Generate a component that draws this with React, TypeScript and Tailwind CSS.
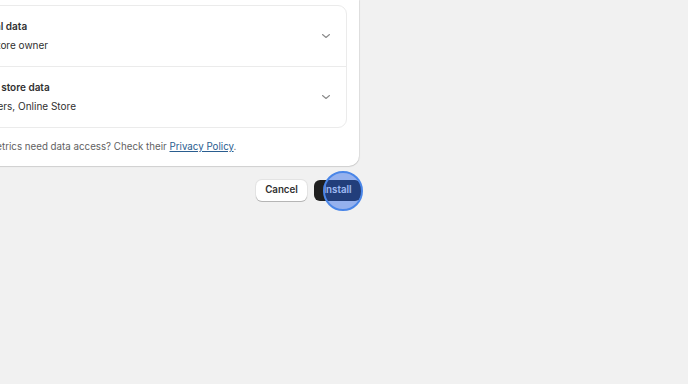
import React from 'react';

const ROWS = [
  { title: 'Personal data', detail: 'Email, store owner' },
  { title: 'General store data', detail: 'Customers, Online Store' },
];

function Chevron() {
  return (
    <svg width="10" height="10" viewBox="0 0 10 10" fill="none" className="text-[#8a8a8a]">
      <path d="M1.5 3.5L5 6.5l3.5-3" stroke="currentColor" strokeWidth="1.1" strokeLinecap="round" strokeLinejoin="round" />
    </svg>
  );
}

export default function App() {
  return (
    <div
      className="min-h-[384px] w-[688px] overflow-hidden bg-[#f1f1f1] text-[#303030]"
      style={{ fontFamily: 'Inter, "Liberation Sans", sans-serif' }}
    >
      <div className="-ml-[53px] flex w-[412px] flex-col">
        {/* Dialog body */}
        <div className="rounded-br-[10px] bg-white pl-[13px] pr-[12px] pt-[5px] pb-[11px] shadow-[0_1px_1px_rgba(0,0,0,0.14),1px_0_1px_rgba(0,0,0,0.07)]">
          <div className="rounded-[9px] border border-[#ebebeb]">
            {ROWS.map((row, i) => (
              <div
                key={row.title}
                className={`flex items-center justify-between py-[11px] pr-[15px] ${
                  i > 0 ? 'border-t border-[#ebebeb]' : ''
                }`}
              >
                <div className="text-[10px] leading-[19px]">
                  <div className="font-semibold">{row.title}</div>
                  <div>{row.detail}</div>
                </div>
                <Chevron />
              </div>
            ))}
          </div>
          <p className="mt-[11px] pl-[1px] text-[9.75px] leading-[16px] text-[#616161]">
            Does Metrics need data access? Check their{' '}
            <span className="text-[#2a5d8f] underline">Privacy Policy</span>.
          </p>
        </div>

        {/* Actions */}
        <div className="-mr-[2px] mt-[14px] flex items-start justify-end gap-[7px]">
          <button className="h-[21px] w-[51px] rounded-[6px] bg-white text-[9.75px] font-semibold text-[#303030] shadow-[0_1px_0_#b5b5b5,0_0_0_1px_#e3e3e3]">
            Cancel
          </button>
          <div className="relative flex">
            <button className="h-[21px] w-[47px] rounded-[6px] bg-[#1f1f1f] text-[9.75px] font-semibold text-white">
              Install
            </button>
            <div className="absolute left-[9px] top-[-9px] h-[40px] w-[40px] rounded-full border-2 border-[#4a86e8] bg-[rgba(37,99,235,0.45)]" />
          </div>
        </div>
      </div>
    </div>
  );
}
